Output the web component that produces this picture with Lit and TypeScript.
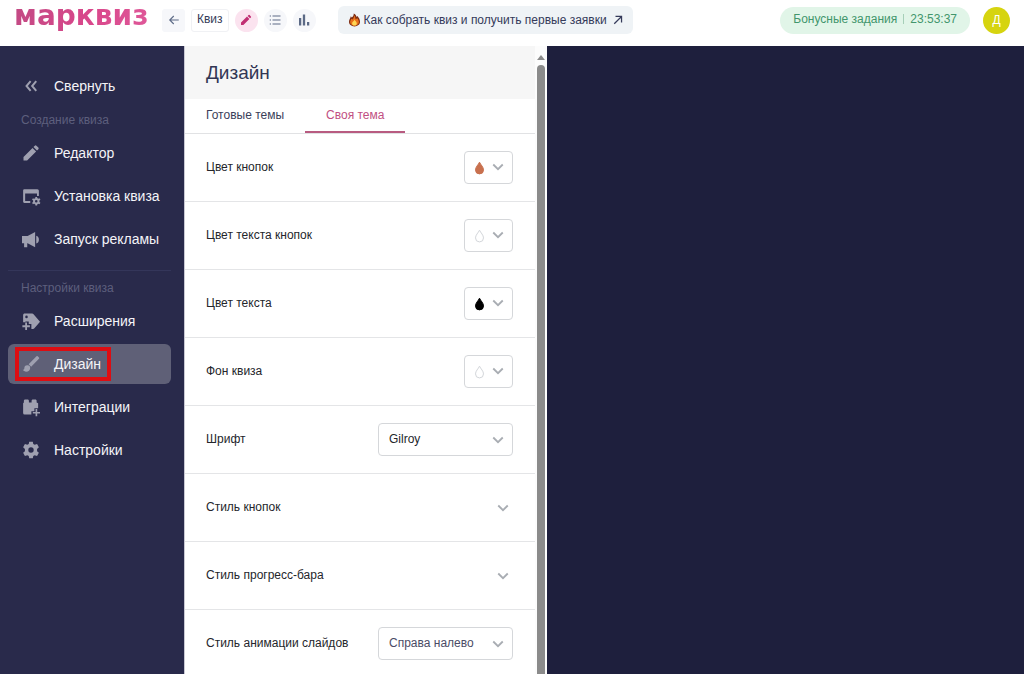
import { LitElement, html, css, svg, nothing, TemplateResult, SVGTemplateResult } from "lit";
import { customElement, state } from "lit/decorators.js";
import { classMap } from "lit/directives/class-map.js";

const icons: Record<string, SVGTemplateResult> = {
  collapse: svg`<path d="M11.500 5.500 6 12l5.500 6.500M19 5.500 13.500 12l5.500 6.500" fill="none" stroke="currentColor" stroke-width="2.600"/>`,
  pencil: svg`<path d="M2 17.200V22h4.800L18.800 10 14 5.200zM15.300 4l4.700 4.700 1.800-1.800a1.500 1.500 0 0 0 0-2.100l-2.600-2.600a1.500 1.500 0 0 0-2.100 0z"/>`,
  windowGear: svg`<path d="M3 3h17.500a2 2 0 0 1 2 2v7H20V8.500H4.200v10.300H11v2.400H3a1.500 1.500 0 0 1-1.500-1.500V4.500A1.500 1.500 0 0 1 3 3z"/><circle cx="19" cy="19" r="3" fill="none" stroke="currentColor" stroke-width="2.600"/><path d="M19 13.200v2.600m0 6.400v2.600m-5-8.700 2.200 1.300m5.600 3.200 2.200 1.300m0-5.800-2.200 1.300m-5.600 3.200-2.200 1.300" stroke="currentColor" stroke-width="2.400"/>`,
  megaphone: svg`<path d="M0 8h7.500v9.500H7v5.500H2.800v-5.500H0zM7.500 8 17.500 2.500v20.500l-10-5.500zM19 7.500c4.800 1 4.800 9.500 0 10.500z"/>`,
  tagPlus: svg`<path fill-rule="evenodd" d="M3.500 2h10c.800 0 1.400.300 1.900.900L24 13l-7.500 8.800c-.500.500-1.100.800-1.800.8H12.500v-6.500H9V12.500H4.500v1H1.500V4c0-1.100.900-2 2-2zm2.500 2.800a1.700 1.700 0 1 0 0 3.400 1.700 1.700 0 0 0 0-3.400z"/><path d="M5.500 14v10M.500 19h10" stroke="currentColor" stroke-width="2.400"/>`,
  brush: svg`<path d="M7 13.600a3.900 3.900 0 0 0-3.900 3.900c0 1.500-1 2.300-2.100 2.300 1 1.500 2.600 2.400 4.500 2.400 3 0 5.400-2.300 5.400-5A3.600 3.600 0 0 0 7 13.600zM22.600 3.400l-1.600-1.600a1.200 1.200 0 0 0-1.700 0L8.900 12.200l3.300 3.300L22.600 5.100a1.200 1.200 0 0 0 0-1.700z"/>`,
  bricksPlus: svg`<path d="M2.500 6V3.800C2.500 2.800 3.200 2 4.200 2h3.300C8.500 2 9.200 2.800 9.200 3.800V6h3.600V3.800c0-1 .700-1.800 1.700-1.800h3.300c1 0 1.700.8 1.700 1.800V6L21.500 7v6.500h-5V17.500h-4V22H3.500a2 2 0 0 1-2-2V7z"/><path d="M19.200 14.800v9.600M14.400 19.600H24" stroke="currentColor" stroke-width="2.200"/>`,
  gear: svg`<path fill-rule="evenodd" d="M9.600 1h4.800l.6 3 1.900 1.100 3.200-1 2.400 4.200-2.400 2.200v3l2.400 2.200-2.400 4.200-3.200-1-1.900 1.100-.6 3H9.600l-.6-3-1.900-1.100-3.200 1-2.400-4.200 2.400-2.200v-3L1.500 8.300l2.400-4.200 3.200 1L9 4zM12 8.400a3.600 3.600 0 1 0 0 7.200 3.600 3.600 0 0 0 0-7.200z"/>`,
  back: svg`<path d="M21.500 12H4m7.500-8L3.500 12l8 8" fill="none" stroke="currentColor" stroke-width="2.200"/>`,
  list: svg`<path d="M7 4h16M7 12h16M7 20h16M1.500 4H4M1.500 12H4M1.500 20H4" stroke="currentColor" stroke-width="2.200"/>`,
  bars: svg`<path d="M2 8h4.500v15H2zM9.700 1h4.600v22H9.700zM18 16h4.500v7H18z"/>`,
  arrowOut: svg`<path d="M3 21 20.500 3.500M6 3.500h14.500V18" fill="none" stroke="currentColor" stroke-width="3"/>`,
  chevron: svg`<path d="M2.500 7 12 16.500 21.500 7" fill="none" stroke="currentColor" stroke-width="3.600"/>`,
};

const icon = (name: string, cls = "") =>
  html`<svg class="icon ${cls}" viewBox="0 0 24 24" fill="currentColor" aria-hidden="true">${icons[name]}</svg>`;

const flame = html`<svg class="flame" viewBox="0 0 12 14" aria-hidden="true">
  <path d="M5.200 0C7.500 1 8 2.500 8.200 3.800l1-1.300C11 4.500 12 6.500 12 9c0 3-2.600 5-6 5s-6-2-6-5c0-2.500 1.500-3.800 2-6l1 1.400C4.400 3.500 5.200 2 5.200 0z" fill="#7d2c12"/>
  <path d="M5.600 2c1.500 1.500 1.300 3 1.600 4.300L9 5c1 1.200 1.800 2.700 1.800 4.200 0 2.300-2 4-4.800 4s-4.800-1.700-4.800-4c0-1.400.800-2.400 1.300-3.700l1.200 1C4.800 5.500 5.500 4 5.600 2z" fill="#e8701a"/>
  <path d="M6.100 6.500c.3 1.600 2.400 2.300 2.400 4.200 0 1.500-1 2.400-2.500 2.400s-2.600-.9-2.600-2.400c0-1.700 2-2.200 2.700-4.200z" fill="#ffd755"/>
</svg>`;

@customElement("color-picker-button")
class ColorPickerButton extends LitElement {
  static properties = { fill: {}, label: {} };
  declare fill: string;
  declare label: string;

  static styles = css`
    .swatch {
      display: flex;
      align-items: center;
      justify-content: space-between;
      width: 49px;
      height: 33px;
      padding: 0 8px 0 9px;
      border: 1px solid #d5d7da;
      border-radius: 4px;
      background: #fff;
      color: #a9adb3;
      cursor: pointer;
    }
    .drop { width: 11px; height: 14px; }
    .icon { width: 12px; height: 12px; padding-bottom: 2px; }
  `;

  render() {
    const white = this.fill === "#ffffff";
    return html`<button class="swatch" aria-label=${this.label}>
      <svg class="drop" viewBox="0 0 10 14" aria-hidden="true">
        <path d="M5 1.200C6.200 3.800 9 6 9 8.900a4 4 0 0 1-8 0C1 6 3.800 3.800 5 1.200z" fill=${this.fill} stroke=${white ? "#d3d6da" : this.fill}/>
      </svg>
      ${icon("chevron")}
    </button>`;
  }
}

interface MenuItem { text: string; icon: string; marked?: boolean }

@customElement("app-root")
class AppRoot extends LitElement {
  @state() private section = "Дизайн";

  private readonly create: MenuItem[] = [
    { text: "Редактор", icon: "pencil" },
    { text: "Установка квиза", icon: "windowGear" },
    { text: "Запуск рекламы", icon: "megaphone" },
  ];

  private readonly settings: MenuItem[] = [
    { text: "Расширения", icon: "tagPlus" },
    { text: "Дизайн", icon: "brush", marked: true },
    { text: "Интеграции", icon: "bricksPlus" },
    { text: "Настройки", icon: "gear" },
  ];

  static styles = css`
    :host {
      display: flex;
      flex-direction: column;
      height: 100vh;
      overflow: hidden;
      background: #fff;
      color: #24262b;
      font-family: "Liberation Sans", Arial, sans-serif;
      font-size: 12px;
      line-height: 16px;
    }
    * { box-sizing: border-box; }
    a { color: inherit; text-decoration: none; }
    button, select { font: inherit; margin: 0; cursor: pointer; }
    .icon { display: block; flex: none; width: 18px; height: 18px; overflow: visible; }

    .top {
      display: flex;
      flex: none;
      align-items: center;
      height: 46px;
      padding: 0 14px 6px 14px;
    }
    .logo {
      width: 148px;
      padding-bottom: 8px;
      font: bold 28px/32px "DejaVu Sans", sans-serif;
      background: linear-gradient(100deg, #c24a84, #d9478b 50%, #e05c9c);
      background-clip: text;
      -webkit-background-clip: text;
      color: transparent;
    }
    .tools { display: flex; align-items: center; gap: 6px; }
    .tool {
      display: flex;
      align-items: center;
      justify-content: center;
      width: 23px;
      height: 23px;
      padding: 0;
      border: 0;
      border-radius: 12px;
      background: #f6f7fa;
      color: #5c6a86;
    }
    .tool .icon { width: 12px; height: 12px; }
    .tool.square { border-radius: 3px; }
    .tool.on { background: #fbe3ef; color: #c12f73; }
    .crumb {
      padding: 1px 5px 4px;
      border: 1px solid #f0f1f4;
      border-radius: 3px;
      color: #363c58;
    }
    .promo {
      display: flex;
      align-items: center;
      gap: 4px;
      height: 28px;
      margin-left: 22px;
      padding: 0 10px 0 11px;
      border-radius: 6px;
      background: #eff3f6;
      color: #353a5a;
      white-space: nowrap;
    }
    .promo .icon { width: 10px; height: 10px; margin-left: 2px; }
    .flame { width: 11px; height: 14px; }
    .bonus {
      display: flex;
      align-items: center;
      gap: 6px;
      height: 27px;
      margin-left: auto;
      padding: 0 13px 2px;
      border: 0;
      border-radius: 14px;
      background: #e1f5e8;
      color: #42966c;
      white-space: nowrap;
    }
    .bar { width: 1px; height: 10px; background: #a6cfb8; }
    .avatar {
      width: 27px;
      height: 27px;
      margin-left: 13px;
      padding: 0;
      border: 0;
      border-radius: 50%;
      background: #d6d40f;
      color: #fff;
    }

    .body { display: flex; flex: 1; min-height: 0; }
    .side {
      display: flex;
      flex: none;
      flex-direction: column;
      width: 184px;
      padding: 20px 13px 0 8px;
      background: #292a4b;
      color: #9fa0b0;
    }
    .group { display: flex; flex-direction: column; gap: 3px; }
    .item {
      position: relative;
      display: flex;
      align-items: center;
      gap: 14px;
      width: 100%;
      height: 40px;
      padding: 0 14px;
      border: 0;
      border-radius: 6px;
      background: none;
      color: inherit;
      font-size: 14px;
      text-align: left;
      white-space: nowrap;
    }
    .item.current { background: #5f6077; }
    .name { color: #f4f4f8; }
    .mark {
      position: absolute;
      inset: 3px 60px 3px 7px;
      border: 4px solid #dd0d12;
    }
    .caption { margin: 0; padding: 6px 13px 5px; font-size: 12px; font-weight: 400; color: #5d5f7d; }
    .caption.second { margin-top: 11px; padding: 9px 13px 5px; border-top: 1px solid #34365a; }

    .panel { display: flex; flex: none; width: 363px; border-left: 1px solid #c9c9d4; }
    .content { flex: 1; min-width: 0; overflow: hidden; }
    .title {
      margin: 0;
      padding: 15px 21px 14px;
      background: #f6f6f6;
      color: #323654;
      font-size: 19px;
      font-weight: 400;
      line-height: 24px;
    }
    .tabs { display: flex; height: 35px; border-bottom: 1px solid #e1e2e4; }
    .tab {
      padding: 0 21px;
      border: 0;
      border-bottom: 2px solid transparent;
      background: none;
      color: #3a3e59;
    }
    .tab.on { border-color: #b85b80; color: #c14f82; }
    .row {
      display: flex;
      align-items: center;
      justify-content: space-between;
      height: 68px;
      padding: 0 22px 0 21px;
      border-bottom: 1px solid #e4e5e7;
    }
    .text { padding-bottom: 2px; }
    .fold {
      width: 100%;
      border-width: 0 0 1px;
      padding-right: 26px;
      background: none;
      color: inherit;
      text-align: left;
    }
    .chev { width: 12px; height: 12px; color: #a9adb3; }
    .pick { display: grid; width: 135px; align-items: center; }
    .pick select, .pick .chev { grid-area: 1 / 1; }
    .pick select {
      appearance: none;
      width: 100%;
      height: 33px;
      padding: 0 24px 1px 10px;
      border: 1px solid #d5d7da;
      border-radius: 4px;
      background: #fff;
      color: #24262b;
    }
    .pick select.soft { color: #4b4c66; }
    .pick .chev { justify-self: end; margin-right: 9px; pointer-events: none; }
    .rail {
      display: flex;
      flex: none;
      flex-direction: column;
      align-items: center;
      gap: 5px;
      width: 12px;
      padding-top: 9px;
      background: #fcfcfc;
    }
    .up { border: 4px solid transparent; border-top: 0; border-bottom: 5px solid #8b8b8b; }
    .thumb { flex: 1; width: 8px; border-radius: 4px 4px 0 0; background: #8b8b8b; }
    .preview { flex: 1; background: #1e1f3d; }
  `;

  private item(i: MenuItem) {
    const current = i.text === this.section;
    return html`<a href="#" class=${classMap({ item: true, current })} aria-current=${current ? "page" : nothing}
      @click=${(e: Event) => { e.preventDefault(); this.section = i.text; }}>
      ${icon(i.icon)}<span class="name">${i.text}</span>${i.marked ? html`<span class="mark"></span>` : nothing}
    </a>`;
  }

  private color(label: string, fill: string) {
    return html`<div class="row"><span class="text">${label}</span>
      <color-picker-button .fill=${fill} .label=${label}></color-picker-button></div>`;
  }

  private select(id: string, label: string, value: string, soft = false): TemplateResult {
    return html`<div class="row"><label class="text" for=${id}>${label}</label>
      <div class="pick"><select id=${id} class=${classMap({ soft })}><option>${value}</option></select>${icon("chevron", "chev")}</div></div>`;
  }

  private fold(label: string) {
    return html`<button class="row fold" aria-expanded="false"><span class="text">${label}</span>${icon("chevron", "chev")}</button>`;
  }

  render() {
    return html`
      <header class="top">
        <a class="logo" href="#">марквиз</a>
        <nav class="tools">
          <button class="tool square" aria-label="Назад">${icon("back")}</button>
          <a class="crumb" href="#">Квиз</a>
          <button class="tool on" aria-label="Редактор">${icon("pencil")}</button>
          <button class="tool" aria-label="Заявки">${icon("list")}</button>
          <button class="tool" aria-label="Статистика">${icon("bars")}</button>
        </nav>
        <a class="promo" href="#">${flame}<span>Как собрать квиз и получить первые заявки</span>${icon("arrowOut")}</a>
        <button class="bonus"><span>Бонусные задания</span><span class="bar"></span><span>23:53:37</span></button>
        <button class="avatar">Д</button>
      </header>
      <div class="body">
        <nav class="side">
          <button class="item">${icon("collapse")}<span class="name">Свернуть</span></button>
          <h2 class="caption">Создание квиза</h2>
          <div class="group">${this.create.map((i) => this.item(i))}</div>
          <h2 class="caption second">Настройки квиза</h2>
          <div class="group">${this.settings.map((i) => this.item(i))}</div>
        </nav>
        <section class="panel">
          <div class="content">
            <h1 class="title">Дизайн</h1>
            <div class="tabs" role="tablist">
              <button class="tab" role="tab" aria-selected="false">Готовые темы</button>
              <button class="tab on" role="tab" aria-selected="true">Своя тема</button>
            </div>
            ${this.color("Цвет кнопок", "#c8704e")}
            ${this.color("Цвет текста кнопок", "#ffffff")}
            ${this.color("Цвет текста", "#000000")}
            ${this.color("Фон квиза", "#ffffff")}
            ${this.select("font", "Шрифт", "Gilroy")}
            ${this.fold("Стиль кнопок")}
            ${this.fold("Стиль прогресс-бара")}
            ${this.select("motion", "Стиль анимации слайдов", "Справа налево", true)}
          </div>
          <div class="rail"><span class="up"></span><span class="thumb"></span></div>
        </section>
        <main class="preview"></main>
      </div>`;
  }
}
